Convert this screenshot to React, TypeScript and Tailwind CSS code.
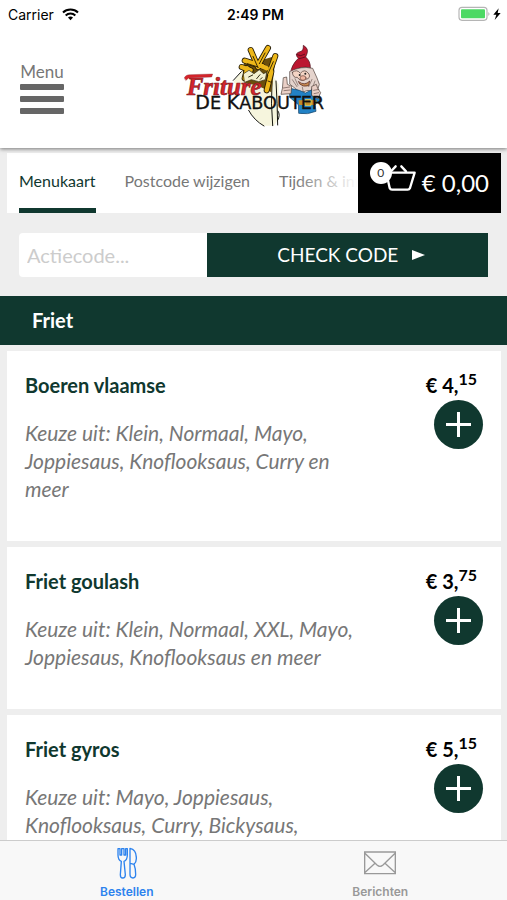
import { useState } from 'react'

type Dish = { name: string; euros: string; cents: string; options: string }

const TABS = ['Menukaart', 'Postcode wijzigen', 'Tijden & info']

const DISHES: Dish[] = [
  {
    name: 'Boeren vlaamse',
    euros: '4',
    cents: '15',
    options: 'Klein, Normaal, Mayo, Joppiesaus, Knoflooksaus, Curry en meer',
  },
  { name: 'Friet goulash', euros: '3', cents: '75', options: 'Klein, Normaal, XXL, Mayo, Joppiesaus, Knoflooksaus en meer' },
  { name: 'Friet gyros', euros: '5', cents: '15', options: 'Mayo, Joppiesaus, Knoflooksaus, Curry, Bickysaus,' },
]

function StatusBar() {
  return (
    <div className="grid h-7 shrink-0 grid-cols-[1fr_auto_1fr] items-center pr-1 pl-2 font-['Inter',sans-serif] text-[14px] text-black">
      <div className="flex items-center gap-2">
        <span>Carrier</span>
        <svg width="17" height="13" viewBox="0 0 51 38" fill="none" stroke="#000" strokeWidth="6">
          <path d="M3 13 C15 1 36 1 48 13" />
          <path d="M11 22 C19 14 32 14 40 22" />
          <path d="M18 28 C22 24 29 24 33 28 L25.5 36 Z" fill="#000" stroke="none" />
        </svg>
      </div>
      <span className="font-semibold">2:49 PM</span>
      <div className="flex items-center justify-end">
        <svg width="45" height="16" viewBox="0 0 135 48">
          <rect x="3" y="4" width="84" height="39" rx="9" fill="#fff" stroke="#b5b5b5" strokeWidth="3.5" />
          <rect x="9" y="10" width="72" height="27" rx="3" fill="#4cd964" />
          <path d="M91 18 q7 6 0 12 z" fill="#b5b5b5" />
          <path d="M122 7 L106 26 h9 l-5 16 L128 21 h-9 z" fill="#000" />
        </svg>
      </div>
    </div>
  )
}

function Logo() {
  return (
    <svg width="144" height="86" viewBox="34 33 432 258" role="img" aria-label="Friture De Kabouter" strokeLinejoin="round" strokeLinecap="round">
      {/* cone of fries */}
      <path d="M212 122 L188 152 L232 200 L240 250 L277 284 L310 284 L323 264 L324 160 L304 130 L268 118 Z" fill="#f6f5dd" />
      <path d="M212 122 L188 148 M234 238 Q250 268 280 285 M304 150 Q300 220 306 284 M316 150 Q320 220 321 282 M322 240 Q330 252 321 268" fill="none" stroke="#15150f" strokeWidth="3" />
      <path d="M214 112 L226 84 L250 92 L284 84 L316 74 L302 184 L262 164 L224 156 Z" fill="#6b4f0c" />
      <g stroke="#241b06" strokeWidth="18">
        <path d="M240 57 L262 108" />
        <path d="M292 51 L264 100" />
        <path d="M222 89 L276 106" />
        <path d="M213 108 L240 118" />
        <path d="M222 142 L230 112" />
        <path d="M288 178 L302 122" />
        <path d="M314 75 L296 126" />
      </g>
      <g stroke="#edb719" strokeWidth="13">
        <path d="M222 89 L276 106" />
        <path d="M213 108 L240 118" />
        <path d="M222 142 L230 112" />
        <path d="M288 178 L302 122" />
        <path d="M240 57 L262 108" />
        <path d="M292 51 L264 100" />
        <path d="M314 75 L296 126" />
        <path d="M252 96 L288 112" />
      </g>
      <path d="M247 76 L262 110 M283 66 L266 98 M308 92 L290 132 M230 98 L262 108 M292 150 L302 154" fill="none" stroke="#3a2a04" strokeWidth="3" />
      <path d="M219 128 L235 118 L250 128 L266 116 L278 128 L288 124 L284 146 L264 152 L242 146 L222 154 Z" fill="#f3f0d0" stroke="#302b18" strokeWidth="2" />
      <path d="M234 138 l12 -6 M258 143 l10 -12 M274 140 l-5 5" stroke="#302b18" strokeWidth="3" />

      {/* gnome */}
      <path d="M360 127 Q361 103 383 82 Q369 67 388 62 Q399 61 398 43 Q415 53 409 68 L405 78 Q420 91 419 111 Q391 101 360 127 Z" fill="#bb1630" stroke="#48101a" strokeWidth="2" />
      <path d="M378 71 Q391 78 402 70 M386 83 Q399 80 403 78" fill="none" stroke="#640c20" strokeWidth="3" />
      <path d="M358 121 Q391 104 426 112 L439 141 L446 160 L438 187 L412 178 L390 185 L358 160 Z" fill="#e5d4cd" stroke="#4a3935" strokeWidth="2" />
      <path d="M365 124 Q379 113 389 127 Q402 111 415 129 Q421 142 405 145 Q390 154 380 139 Q367 142 365 124" fill="#f4d4c4" stroke="#47342f" strokeWidth="2" />
      <circle cx="387" cy="132" r="3" fill="#222" />
      <circle cx="404" cy="128" r="3" fill="#222" />
      <ellipse cx="397" cy="141" rx="9" ry="7" fill="#efb6a0" stroke="#654037" strokeWidth="2" />
      <path d="M384 152 Q402 166 417 150 L414 164 Q398 169 388 160 Z" fill="#c98c52" stroke="#4a1b18" strokeWidth="2" />
      <path d="M365 146 l14 21 M373 143 l9 20 M424 145 l-10 22 M433 150 l-9 24 M395 168 l3 16" stroke="#6f5d57" strokeWidth="2" />
      <path d="M359 172 L386 178 L404 186 L426 175 L446 187 L448 210 L433 219 L436 241 Q410 252 384 247 L383 221 L357 199 Z" fill="#2282c6" stroke="#123e61" strokeWidth="2" />
      <path d="M339 140 L348 138 L350 160 L363 166 L361 188 L331 190 L335 173 Z M424 166 L437 160 L441 172 L450 185 L442 203 L424 194 Z" fill="#ead0c7" stroke="#46362f" strokeWidth="2" />
      <path d="M338 171 l19 -3 M340 179 l18 -2 M429 178 l16 -3 M430 188 l14 -3" stroke="#66504a" strokeWidth="2" />
      <path d="M384 208 L438 207 L436 222 L385 222 Z" fill="#c18a28" />
      <path d="M404 206 h17 v17 h-17 z" fill="none" stroke="#e5cb51" strokeWidth="3" />

      <text x="48" y="191" fill="#d5242c" stroke="#7d1c22" strokeWidth="2" className="font-['Liberation_Serif',serif] text-[75px] font-bold italic">
        Friture
      </text>
      <path d="M41 140 Q46 130 60 131 L126 129 L123 138 L54 141 L46 148 Z" fill="#d5242c" stroke="#7d1c22" strokeWidth="1" />
      <text x="74" y="235" fill="#111" stroke="#111" strokeWidth="1" className="font-['DejaVu_Sans',sans-serif] text-[53px]">
        <tspan className="text-[57px]">D</tspan>E <tspan className="text-[57px]">K</tspan>ABOUTER
      </text>
    </svg>
  )
}

function BasketIcon() {
  return (
    <svg width="32" height="28" viewBox="0 0 96 84" fill="none" stroke="#fff" strokeWidth="7" strokeLinecap="round" strokeLinejoin="round">
      <path d="M7 29 H92 L78 75 Q76 80 71 80 H24 Q19 80 17 75 Z" />
      <path d="M22 24 L35 10 M66 25 L52 10" />
    </svg>
  )
}

function CutleryIcon() {
  return (
    <svg width="20" height="32" viewBox="0 0 60 96" fill="none" stroke="currentColor" strokeWidth="4" strokeLinejoin="round">
      <path d="M3 5 V24 Q3 39 13 43 L10 83 Q10 93 17 93 Q25 93 25 83 L21 43 Q31 39 31 24 V5 H26 V24 H21 V5 H14 V24 H9 V5 Z" />
      <path d="M39 4 Q59 8 58 35 Q58 45 51 52 Q56 65 56 82 Q56 93 48 93 Q39 93 39 82 Z M40 49 L51 52" />
    </svg>
  )
}

function MailIcon() {
  return (
    <svg width="32" height="24" viewBox="0 0 96 72" fill="none" stroke="currentColor" strokeWidth="4">
      <path d="M2 3 H94 V68 H2 Z M2 6 L39 42 Q48 50 57 42 L94 6 M2 65 L33 37 M94 65 L63 37" />
    </svg>
  )
}

function DishCard({ dish, onAdd }: { dish: Dish; onAdd: () => void }) {
  return (
    <li className="flex items-start justify-between bg-white pt-5 pr-[18px] pb-[38px] pl-[18px]">
      <div className="max-w-[336px]">
        <h3 className="text-[20px] leading-7 font-bold text-[#10382f]">{dish.name}</h3>
        <p className="mt-5 text-[21px] leading-7 text-[#777] italic">{`Keuze uit: ${dish.options}`}</p>
      </div>
      <div className="flex flex-col items-end gap-px">
        <p className="mr-[6px] text-[20px] leading-7 font-bold text-black">
          {`€ ${dish.euros},`}
          <sup className="text-[16px]">{dish.cents}</sup>
        </p>
        <button
          type="button"
          aria-label={`${dish.name} toevoegen`}
          onClick={onAdd}
          className="flex size-[49px] items-center justify-center rounded-full bg-[#10382f]"
        >
          <svg width="25" height="25" viewBox="0 0 25 25" stroke="#fff" strokeWidth="3">
            <path d="M12.5 0 V25 M0 12.5 H25" />
          </svg>
        </button>
      </div>
    </li>
  )
}

export default function App() {
  const [code, setCode] = useState('')
  const [count, setCount] = useState(0)

  return (
    <div className="flex h-screen flex-col overflow-hidden bg-[#eee] font-['Lato',sans-serif]">
      <div className="relative z-10 shrink-0 bg-white shadow-[0_1px_4px_rgba(0,0,0,0.5)]">
        <StatusBar />
        <header className="grid h-[120px] grid-cols-[1fr_auto_1fr] items-start px-5">
          <button type="button" className="mt-8 w-11 text-[17px] leading-6 text-[#777]">
            Menu
            <svg width="44" height="32" viewBox="0 0 44 32" fill="#666">
              <rect x="0" y="0" width="44" height="6" rx="1" />
              <rect x="0" y="12" width="44" height="6" rx="1" />
              <rect x="0" y="24" width="44" height="6" rx="1" />
            </svg>
          </button>
          <div className="mt-[14px]">
            <Logo />
          </div>
        </header>
      </div>

      <main className="min-h-0 flex-1 overflow-hidden">
        <div className="mt-[5px] mr-[6px] ml-[7px] flex h-[60px] bg-white">
          <nav className="relative flex min-w-0 flex-1 gap-[29px] overflow-hidden pl-3 text-[16px] whitespace-nowrap">
            {TABS.map((tab, i) => (
              <a
                key={tab}
                href="#"
                className={i === 0 ? 'border-b-[5px] border-[#10382f] pt-4 text-[#10382f]' : 'pt-4 text-[#777]'}
              >
                {tab}
              </a>
            ))}
            <div className="pointer-events-none absolute inset-y-0 right-0 w-16 bg-linear-to-r from-transparent to-white" />
          </nav>
          <button type="button" className="flex w-[143px] shrink-0 items-center justify-end bg-black pr-3 text-white">
            <span className="relative mr-[6px] mb-3">
              <BasketIcon />
              <span className="absolute -top-[1px] -left-[14px] flex size-[22px] items-center justify-center rounded-full bg-white text-[12px] text-[#333]">
                {count}
              </span>
            </span>
            <span className="text-[24px]">€ 0,00</span>
          </button>
        </div>

        <form className="mx-[19px] mt-5 flex h-11" onSubmit={(event) => event.preventDefault()}>
          <input
            aria-label="Actiecode"
            placeholder="Actiecode..."
            value={code}
            onChange={(event) => setCode(event.target.value)}
            className="w-2/5 rounded-l bg-white px-2 text-[20px] text-[#444] placeholder:text-[#ccc]"
          />
          <button type="submit" className="flex flex-1 items-center justify-center gap-[14px] bg-[#10382f] pl-2 text-[19px] text-white">
            CHECK CODE
            <svg width="13" height="10" viewBox="0 0 13 10" fill="#fff">
              <path d="M0 0 L13 5 L0 10 Z" />
            </svg>
          </button>
        </form>

        <h2 className="mt-[19px] bg-[#10382f] px-8 text-[20px] leading-[49px] font-bold text-white">Friet</h2>
        <ul className="mt-[6px] mr-[6px] ml-[7px] flex flex-col gap-[6px]">
          {DISHES.map((dish) => (
            <DishCard key={dish.name} dish={dish} onAdd={() => setCount(count + 1)} />
          ))}
        </ul>
      </main>

      <footer className="grid h-[60px] shrink-0 grid-cols-2 border-t border-[#ccc] bg-[#f8f8f8] font-['Inter',sans-serif] text-[12px] leading-4 font-semibold">
        <a href="#" className="flex flex-col items-center pt-[6px] text-[#2d83ee]">
          <CutleryIcon />
          <span className="mt-[5px]">Bestellen</span>
        </a>
        <a href="#" className="flex flex-col items-center pt-[10px] text-[#999]">
          <MailIcon />
          <span className="mt-[9px]">Berichten</span>
        </a>
      </footer>
    </div>
  )
}
